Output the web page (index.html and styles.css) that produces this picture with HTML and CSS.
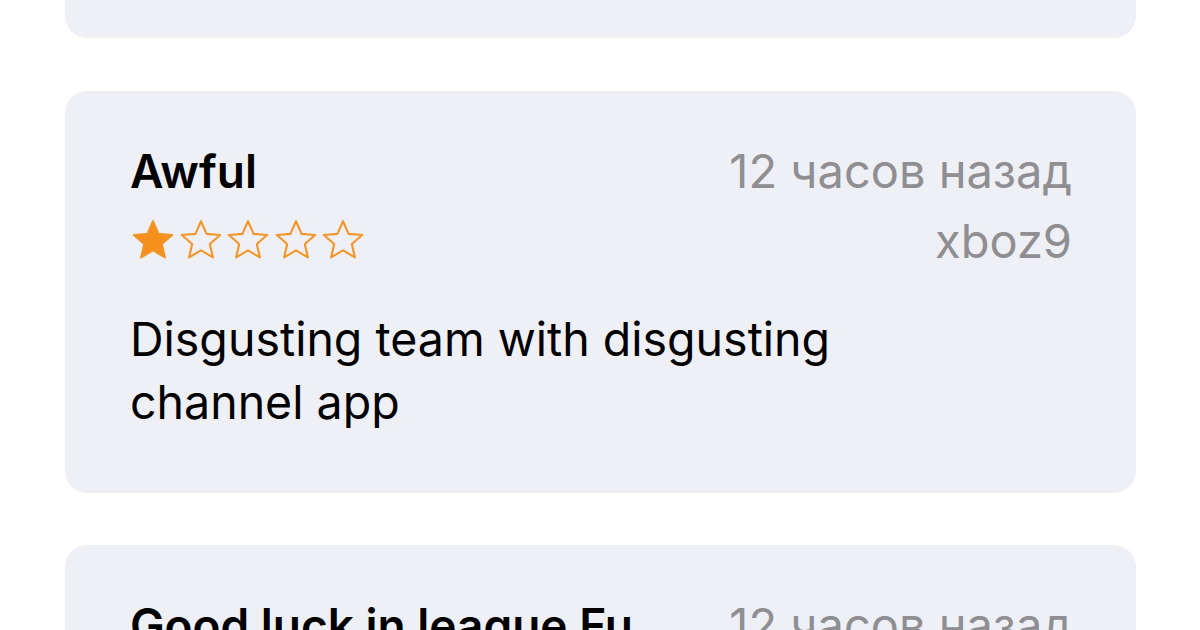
FILE: index.html
```html
<!DOCTYPE html>
<html lang="ru">

<head>
    <meta charset="UTF-8">
    <meta name="viewport" content="width=device-width, initial-scale=1.0">
    <title>Отзывы</title>
    <link rel="stylesheet" href="styles.css">
</head>

<body>
    <!-- Reviews list -->
    <div class="reviews">
        <div class="review review-cut"></div>

        <div class="review">
            <div class="review-head">
                <h2 class="review-title">Awful</h2>
                <span class="review-date">12 часов назад</span>
            </div>
            <div class="review-meta">
                <div class="stars">
                    <svg class="star" viewBox="0 0 24 24"><path class="full" d="M12 2.2l2.9 6.6 7.1.6-5.4 4.7 1.6 7-6.2-3.7-6.2 3.7 1.6-7L2 9.4l7.1-.6z"/></svg>
                    <svg class="star" viewBox="0 0 24 24"><path d="M12 2.2l2.9 6.6 7.1.6-5.4 4.7 1.6 7-6.2-3.7-6.2 3.7 1.6-7L2 9.4l7.1-.6z"/></svg>
                    <svg class="star" viewBox="0 0 24 24"><path d="M12 2.2l2.9 6.6 7.1.6-5.4 4.7 1.6 7-6.2-3.7-6.2 3.7 1.6-7L2 9.4l7.1-.6z"/></svg>
                    <svg class="star" viewBox="0 0 24 24"><path d="M12 2.2l2.9 6.6 7.1.6-5.4 4.7 1.6 7-6.2-3.7-6.2 3.7 1.6-7L2 9.4l7.1-.6z"/></svg>
                    <svg class="star" viewBox="0 0 24 24"><path d="M12 2.2l2.9 6.6 7.1.6-5.4 4.7 1.6 7-6.2-3.7-6.2 3.7 1.6-7L2 9.4l7.1-.6z"/></svg>
                </div>
                <span class="review-author">xboz9</span>
            </div>
            <p class="review-text">Disgusting team with disgusting<br>channel app</p>
        </div>

        <div class="review">
            <div class="review-head">
                <h2 class="review-title">Good luck in league Fu...</h2>
                <span class="review-date">12 часов назад</span>
            </div>
        </div>
    </div>
</body>

</html>
```

FILE: styles.css
```css
/* Basic reset */
* {
    margin: 0;
    padding: 0;
    box-sizing: border-box;
}

body {
    font-family: 'Inter', 'Noto Sans', sans-serif;
    background-color: #fff;
    color: #000;
    overflow: hidden;
    height: 630px;
}

/* Reviews list */
.reviews {
    display: flex;
    flex-direction: column;
    gap: 52.5px;
    padding: 0 64px 0 65px;
}

.review {
    background-color: #eff0f5;
    border-radius: 22px;
    padding: 52px 64px 59px 65px;
}

.review-cut {
    height: 38px;
    padding: 0;
    border-radius: 0 0 22px 22px;
}

/* Header row */
.review-head {
    display: flex;
    justify-content: space-between;
    align-items: baseline;
}

.review-title {
    font-size: 46px;
    font-weight: 600;
    line-height: 56px;
}

.review-date,
.review-author {
    font-size: 47px;
    color: #8e8e93;
    line-height: 56px;
}

/* Stars and author */
.review-meta {
    display: flex;
    justify-content: space-between;
    align-items: flex-start;
    margin-top: 14px;
}

.stars {
    display: flex;
    gap: 1.5px;
    padding-top: 4px;
}

.star {
    width: 46px;
    height: 46px;
}

.star path {
    fill: none;
    stroke: #f0962a;
    stroke-width: 1.1;
    stroke-linejoin: round;
}

.star path.full {
    fill: #f5901d;
}

/* Body */
.review-text {
    margin-top: 39px;
    font-size: 46.5px;
    line-height: 63px;
}
```
